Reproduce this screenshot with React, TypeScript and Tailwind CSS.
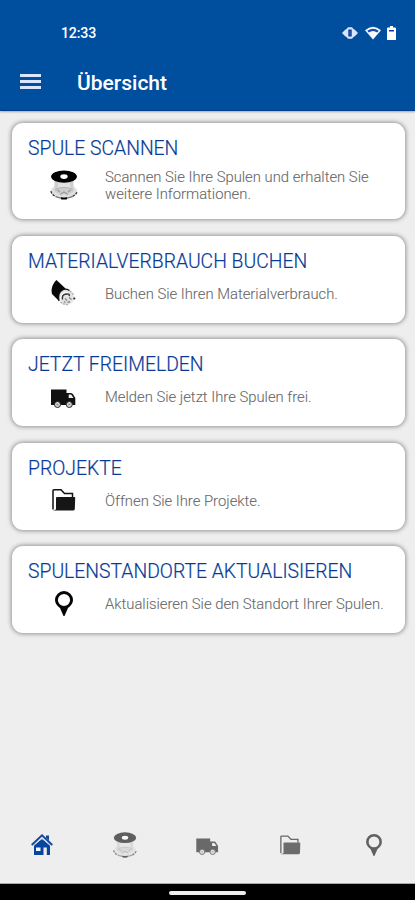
import React from "react";

type IconProps = { className?: string };

function SpoolIcon({ className }: IconProps) {
  return (
    <svg viewBox="0 0 28 30" className={className}>
      <ellipse cx="14" cy="21.500" rx="13.200" ry="7.200" fill="#dedede" />
      <path d="M4.500 9V21C8 25.500 20 25.500 23.500 21V9Z" fill="#cecece" />
      <path d="M8 12v6Q14 16 20 18v-6Z" fill="#e2e2e2" />
      <path d="M5.300 20.500Q8 17.500 14 17.500T22.700 20.500" stroke="#b4b4b4" strokeWidth="1.200" fill="none" />
      <path d="M10 24.500l4-2.500 4 2.500M7.500 20l2.500 2M20.500 20 18 22" stroke="#9a9a9a" strokeWidth="1.100" fill="none" />
      <path d="M.9 21.200Q1.500 24.500 5.500 26.500M22.500 26.500Q26.500 24.500 27.100 21.200" stroke="#333" strokeWidth="1.300" strokeDasharray="2.500 1.300" fill="none" />
      <path d="M5.500 26.700Q14 30 22.500 26.700" stroke="#777" strokeWidth="1.300" fill="none" />
      <path d="M11 28.300Q14 29 17 28.300" stroke="#000" strokeWidth="1.900" fill="none" />
      <ellipse cx="14" cy="6.600" rx="12.900" ry="6.200" fill="#000" />
      <ellipse cx="14" cy="6.600" rx="3.700" ry="2.300" fill="#fff" />
    </svg>
  );
}

function CableIcon({ className }: IconProps) {
  return (
    <svg viewBox="0 0 25 26" className={className}>
      <path d="M5.500 0 14.500 8.500 7.500 20.500 1 14C-.5 9 2 3 5.500 0Z" fill="#080808" />
      <ellipse cx="15.500" cy="17" rx="8" ry="7.300" transform="rotate(35 15.500 17)" fill="#e4e4e4" />
      <path d="M8 21C6 12.500 11.500 6.500 18.500 10.500" stroke="#111" strokeWidth="1.300" fill="none" />
      <path d="M10 20.500Q9.500 12.500 17 12.500" stroke="#fff" strokeWidth="1.500" fill="none" />
      <path d="M11.500 19.500Q10.500 14.500 15 14T18 16" stroke="#333" strokeWidth="1.500" fill="none" />
      <path d="M9.500 22Q13 25 18 24.500M19 11 22.500 14.500" stroke="#aaa" strokeWidth="1.200" strokeDasharray="2 1" fill="none" />
      <path d="M14 18.500l2 2M18 17.500l2.500 2M16.500 22.500l2.500-1M13 21.500l1.500 1" stroke="#888" strokeWidth="1.400" fill="none" />
      <circle cx="23.300" cy="18.500" r="1.100" fill="#222" />
    </svg>
  );
}

function TruckIcon({ className }: IconProps) {
  return (
    <svg viewBox="0 0 25 19" className={className}>
      <path d="M0 .5h15.500V4H20q1.400 0 2.200 1.500L24.300 9v7H0Z" fill="#111" />
      <path d="M17.700 5.500h2.500L22.500 9h-4.800Z" fill="#eee" />
      <g fill="#d8d8d8" stroke="#222" strokeWidth="1">
        <circle cx="6.500" cy="15.500" r="3" /><circle cx="18.300" cy="15.500" r="3" />
      </g>
      <path d="M5.500 15.500h2M17.300 15.500h2" stroke="#888" strokeWidth="1.500" />
    </svg>
  );
}

function FolderIcon({ className }: IconProps) {
  return (
    <svg viewBox="0 0 24 22" className={className}>
      <path d="M1 20.500V1.800Q1 .8 2 .8H9L12.500 4.500H20.500V8" fill="none" stroke="#111" strokeWidth="1.500" />
      <path d="M5 8H22.300Q23.400 8 23.200 9.200L22.800 20Q22.700 21.500 21 21.500H1L4 20.500V9Q4 8 5 8Z" fill="#161616" />
    </svg>
  );
}

function PinIcon({ className }: IconProps) {
  return (
    <svg viewBox="0 0 18 25" className={className}>
      <path fillRule="evenodd" d="M9 0a9 9 0 0 1 9 9c0 3.200-1.900 5.500-5 8L9.500 25h-1L5 17C1.900 14.500 0 12.200 0 9a9 9 0 0 1 9-9Zm0 2.900a6.100 6.100 0 1 0 0 12.200 6.100 6.100 0 0 0 0-12.200Z" fill="#050505" />
    </svg>
  );
}

function HomeIcon({ className }: IconProps) {
  return (
    <svg viewBox="0 0 22 22" className={className}>
      <path d="M15 3.500V1.500h3v5" fill="#17479a" />
      <path d="M3 11 11 5l8 6v10h-3.200v-7.500h-3.300V21H3Z" fill="#0745a0" />
      <path d="M5 13.500h4.500v3.500H5Z" fill="#f3f8ff" />
      <path d="M2.500 11.800 11 4.300l8.500 7.500" fill="none" stroke="#c9d8f0" strokeWidth="1" />
      <path d="M.7 11 11 1.300 21.300 11" fill="none" stroke="#17479a" strokeWidth="1.900" />
    </svg>
  );
}

function StatusIcons() {
  return (
    <div className="flex items-center">
      <svg viewBox="0 0 16 14" className="h-[14px] w-4">
        <path d="M0 7l3.200-3.200L4.500 3 6 1.200h4L11.500 3l1.300.8L16 7l-3.200 3.200-1.300.8-1.500 1.800H6L4.500 11l-1.300-.8Z" fill="#dce5fb" />
        <path d="M6.300 3.500h3.400v7H6.300Z" fill="#073c99" />
        <path d="M7.500 5h1v4h-1Z" fill="#3d69b8" />
      </svg>
      <svg viewBox="0 0 17 14" className="ml-[7px] h-[14px] w-4">
        <path d="M0 4Q8.500-3.500 17 4L8.500 14Z" fill="#f8faff" />
        <path d="M2.500 4.700Q8.500.3 14.500 4.700L13 6.500Q8.500 3.300 4 6.500Z" fill="#174caa" />
      </svg>
      <svg viewBox="0 0 9 14" className="ml-[6px] h-[14px] w-[9px]">
        <path d="M3 0h3v1.500h2q1 0 1 1V14H0V2.500q0-1 1-1h2Z" fill="#fff" />
        <path d="M2 4h5v1.500H2Z" fill="#093d9b" />
      </svg>
    </div>
  );
}

type CardProps = {
  title: string;
  text: React.ReactNode;
  icon: React.ReactNode;
  tall?: boolean;
};

function Card({ title, text, icon, tall }: CardProps) {
  return (
    <section className={`shrink-0 rounded-[11px] bg-white pt-[14px] shadow-[0_0_4px_1px_rgba(0,0,0,0.38)] ${tall ? "h-[96px]" : "h-[87px]"}`}>
      <h2 className="pl-4 text-[19.350px] leading-6 font-light whitespace-nowrap text-[#073b98] [-webkit-text-stroke:0.2px_#073b98]">{title}</h2>
      <div className={`flex items-center ${tall ? "mt-[6px] h-9" : "mt-[4px] h-8"}`}>
        <div className="flex w-[93px] justify-center pl-[10px]">{icon}</div>
        <p className="pt-[2px] text-[14.820px] leading-[17.500px] font-light whitespace-nowrap text-[#686868] [-webkit-text-stroke:0.1px_#686868]">{text}</p>
      </div>
    </section>
  );
}

export default function App() {
  return (
    <div className="flex h-[900px] w-[415px] flex-col overflow-hidden bg-[#eeeeee] font-['Roboto',sans-serif]">
      <header className="h-[111px] shrink-0 border-b border-[#003d8c] bg-[#004f9e] text-white shadow-[0_1px_2px_rgba(0,0,0,0.3)]">
        <div className="flex h-[54px] items-center justify-between pt-[11px] pr-[19px] pl-[61px]">
          <span className="pt-[2px] text-[14.200px] font-medium tracking-[-0.200px]">12:33</span>
          <StatusIcons />
        </div>
        <div className="flex h-[57px] items-center pl-5">
          <div className="-mt-[2px] flex w-[57px] flex-col gap-[3px]">
            <span className="h-[3px] w-[21px] bg-[#dce5ff]" />
            <span className="h-[3px] w-[21px] bg-[#dce5ff]" />
            <span className="h-[3px] w-[21px] bg-[#dce5ff]" />
          </div>
          <h1 className="pt-[3px] text-[21px] font-medium">Übersicht</h1>
        </div>
      </header>

      <main className="flex min-h-0 flex-1 flex-col gap-[16.500px] pt-[12px] pr-[10px] pl-3">
        <Card tall title="SPULE SCANNEN" text={<>Scannen Sie Ihre Spulen und erhalten Sie<br />weitere Informationen.</>} icon={<SpoolIcon className="h-[30px] w-7" />} />
        <Card title="MATERIALVERBRAUCH BUCHEN" text="Buchen Sie Ihren Materialverbrauch." icon={<CableIcon className="-mt-px h-[26px] w-[25px]" />} />
        <Card title="JETZT FREIMELDEN" text="Melden Sie jetzt Ihre Spulen frei." icon={<TruckIcon className="mt-[2px] h-[19px] w-[25px]" />} />
        <Card title="PROJEKTE" text="Öffnen Sie Ihre Projekte." icon={<FolderIcon className="-mt-px h-[22px] w-6" />} />
        <Card title="SPULENSTANDORTE AKTUALISIEREN" text="Aktualisieren Sie den Standort Ihrer Spulen." icon={<PinIcon className="-mt-px h-[25px] w-[18px]" />} />
      </main>

      <nav className="grid h-[77px] shrink-0 grid-cols-5 items-center border-b border-[#aaaaaa]">
        <HomeIcon className="h-[22px] w-[22px] justify-self-center" />
        <SpoolIcon className="h-[26px] w-[26px] justify-self-center opacity-60" />
        <TruckIcon className="mt-[2px] h-[17px] w-[23px] justify-self-center opacity-60" />
        <FolderIcon className="h-5 w-[21px] justify-self-center opacity-60" />
        <PinIcon className="h-[22px] w-4 justify-self-center opacity-60" />
      </nav>
      <footer className="flex h-4 shrink-0 items-center justify-center bg-black pt-[2px]">
        <div className="h-[4px] w-[77px] rounded-full bg-[#eeeeee]" />
      </footer>
    </div>
  );
}
